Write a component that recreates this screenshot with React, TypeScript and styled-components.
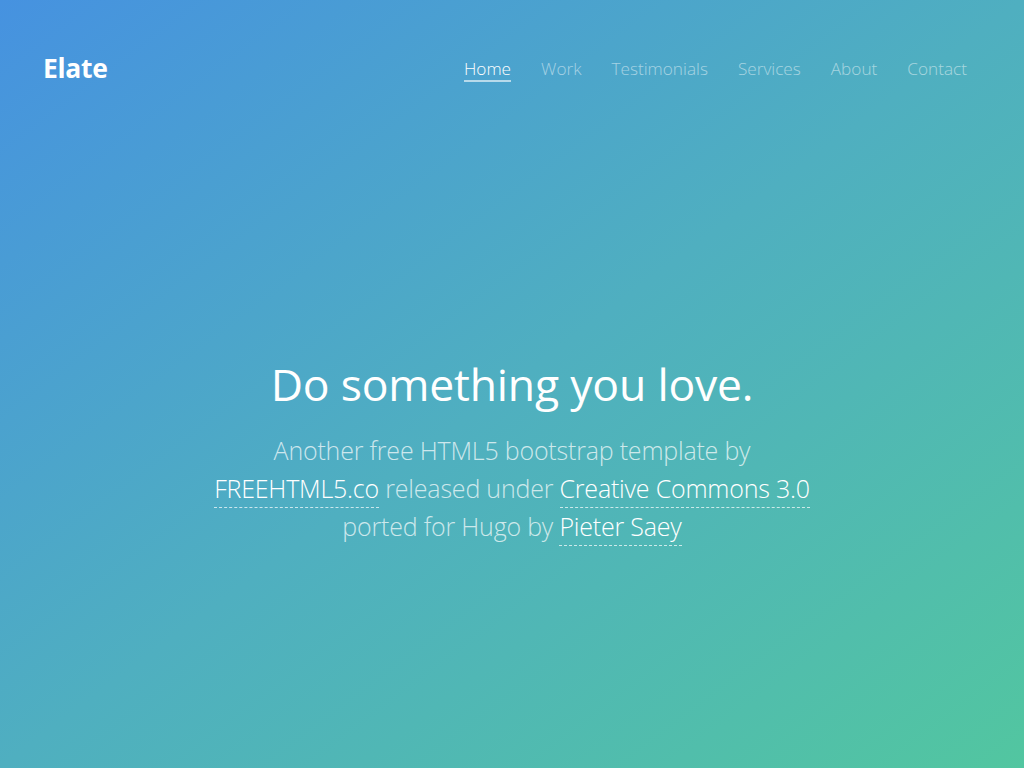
import styled, { createGlobalStyle } from "styled-components";

const GlobalStyle = createGlobalStyle`
    html, body {
        margin: 0;
        padding: 0;
    }

    body {
        font-family: "Open Sans", "Noto Sans", sans-serif;
    }
`;

const Hero = styled.div`
    width: 100%;
    height: 768px;
    display: flex;
    flex-direction: column;
    background: linear-gradient(to bottom right, #4692e0 0%, #4fafc0 50%, #52c6a0 100%);
    color: #fff;
    overflow: hidden;
`;

const Header = styled.header`
    display: flex;
    align-items: center;
    justify-content: space-between;
    padding: 50px 57px 0 43px;
`;

const Logo = styled.a`
    font-family: "Open Sans", sans-serif;
    font-weight: 700;
    font-size: 26.5px;
    letter-spacing: -0.3px;
    color: #fff;
    text-decoration: none;
`;

const Nav = styled.nav`
    display: flex;
    gap: 30px;
    padding-top: 3px;
`;

const NavLink = styled.a<{ $active?: boolean }>`
    font-family: "Open Sans", sans-serif;
    font-weight: 300;
    font-size: 17.2px;
    color: ${(p) => (p.$active ? "#fff" : "rgba(255, 255, 255, 0.5)")};
    text-decoration: none;
    padding-bottom: 0;
    border-bottom: 2px solid ${(p) => (p.$active ? "rgba(255, 255, 255, 0.6)" : "transparent")};
`;

const Content = styled.div`
    flex: 1;
    display: flex;
    flex-direction: column;
    align-items: center;
    justify-content: center;
    text-align: center;
    padding-top: 46px;
`;

const Title = styled.h1`
    margin: 0 0 19px;
    font-family: "Open Sans", sans-serif;
    font-weight: 400;
    font-size: 44.5px;
    letter-spacing: -0.2px;
    line-height: 56px;
`;

const Lead = styled.p`
    margin: 0;
    width: 760px;
    font-family: "Open Sans", sans-serif;
    font-weight: 300;
    font-size: 25px;
    letter-spacing: -0.2px;
    line-height: 38px;
    color: rgba(255, 255, 255, 0.72);
`;

const Link = styled.a`
    color: #fff;
    text-decoration: none;
    padding-bottom: 2px;
    border-bottom: 1px dashed rgba(255, 255, 255, 0.7);
`;

const App = () => {
    const items = ["Home", "Work", "Testimonials", "Services", "About", "Contact"];

    return (
        <>
            <GlobalStyle />
            <Hero>
                <Header>
                    <Logo href="#">Elate</Logo>
                    <Nav>
                        {items.map((item) => (
                            <NavLink key={item} href="#" $active={item === "Home"}>
                                {item}
                            </NavLink>
                        ))}
                    </Nav>
                </Header>

                <Content>
                    <Title>Do something you love.</Title>
                    <Lead>
                        Another free HTML5 bootstrap template by
                        <br />
                        <Link href="#">FREEHTML5.co</Link> released under <Link href="#">Creative Commons 3.0</Link>
                        <br />
                        ported for Hugo by <Link href="#">Pieter Saey</Link>
                    </Lead>
                </Content>
            </Hero>
        </>
    );
};

export default App;
